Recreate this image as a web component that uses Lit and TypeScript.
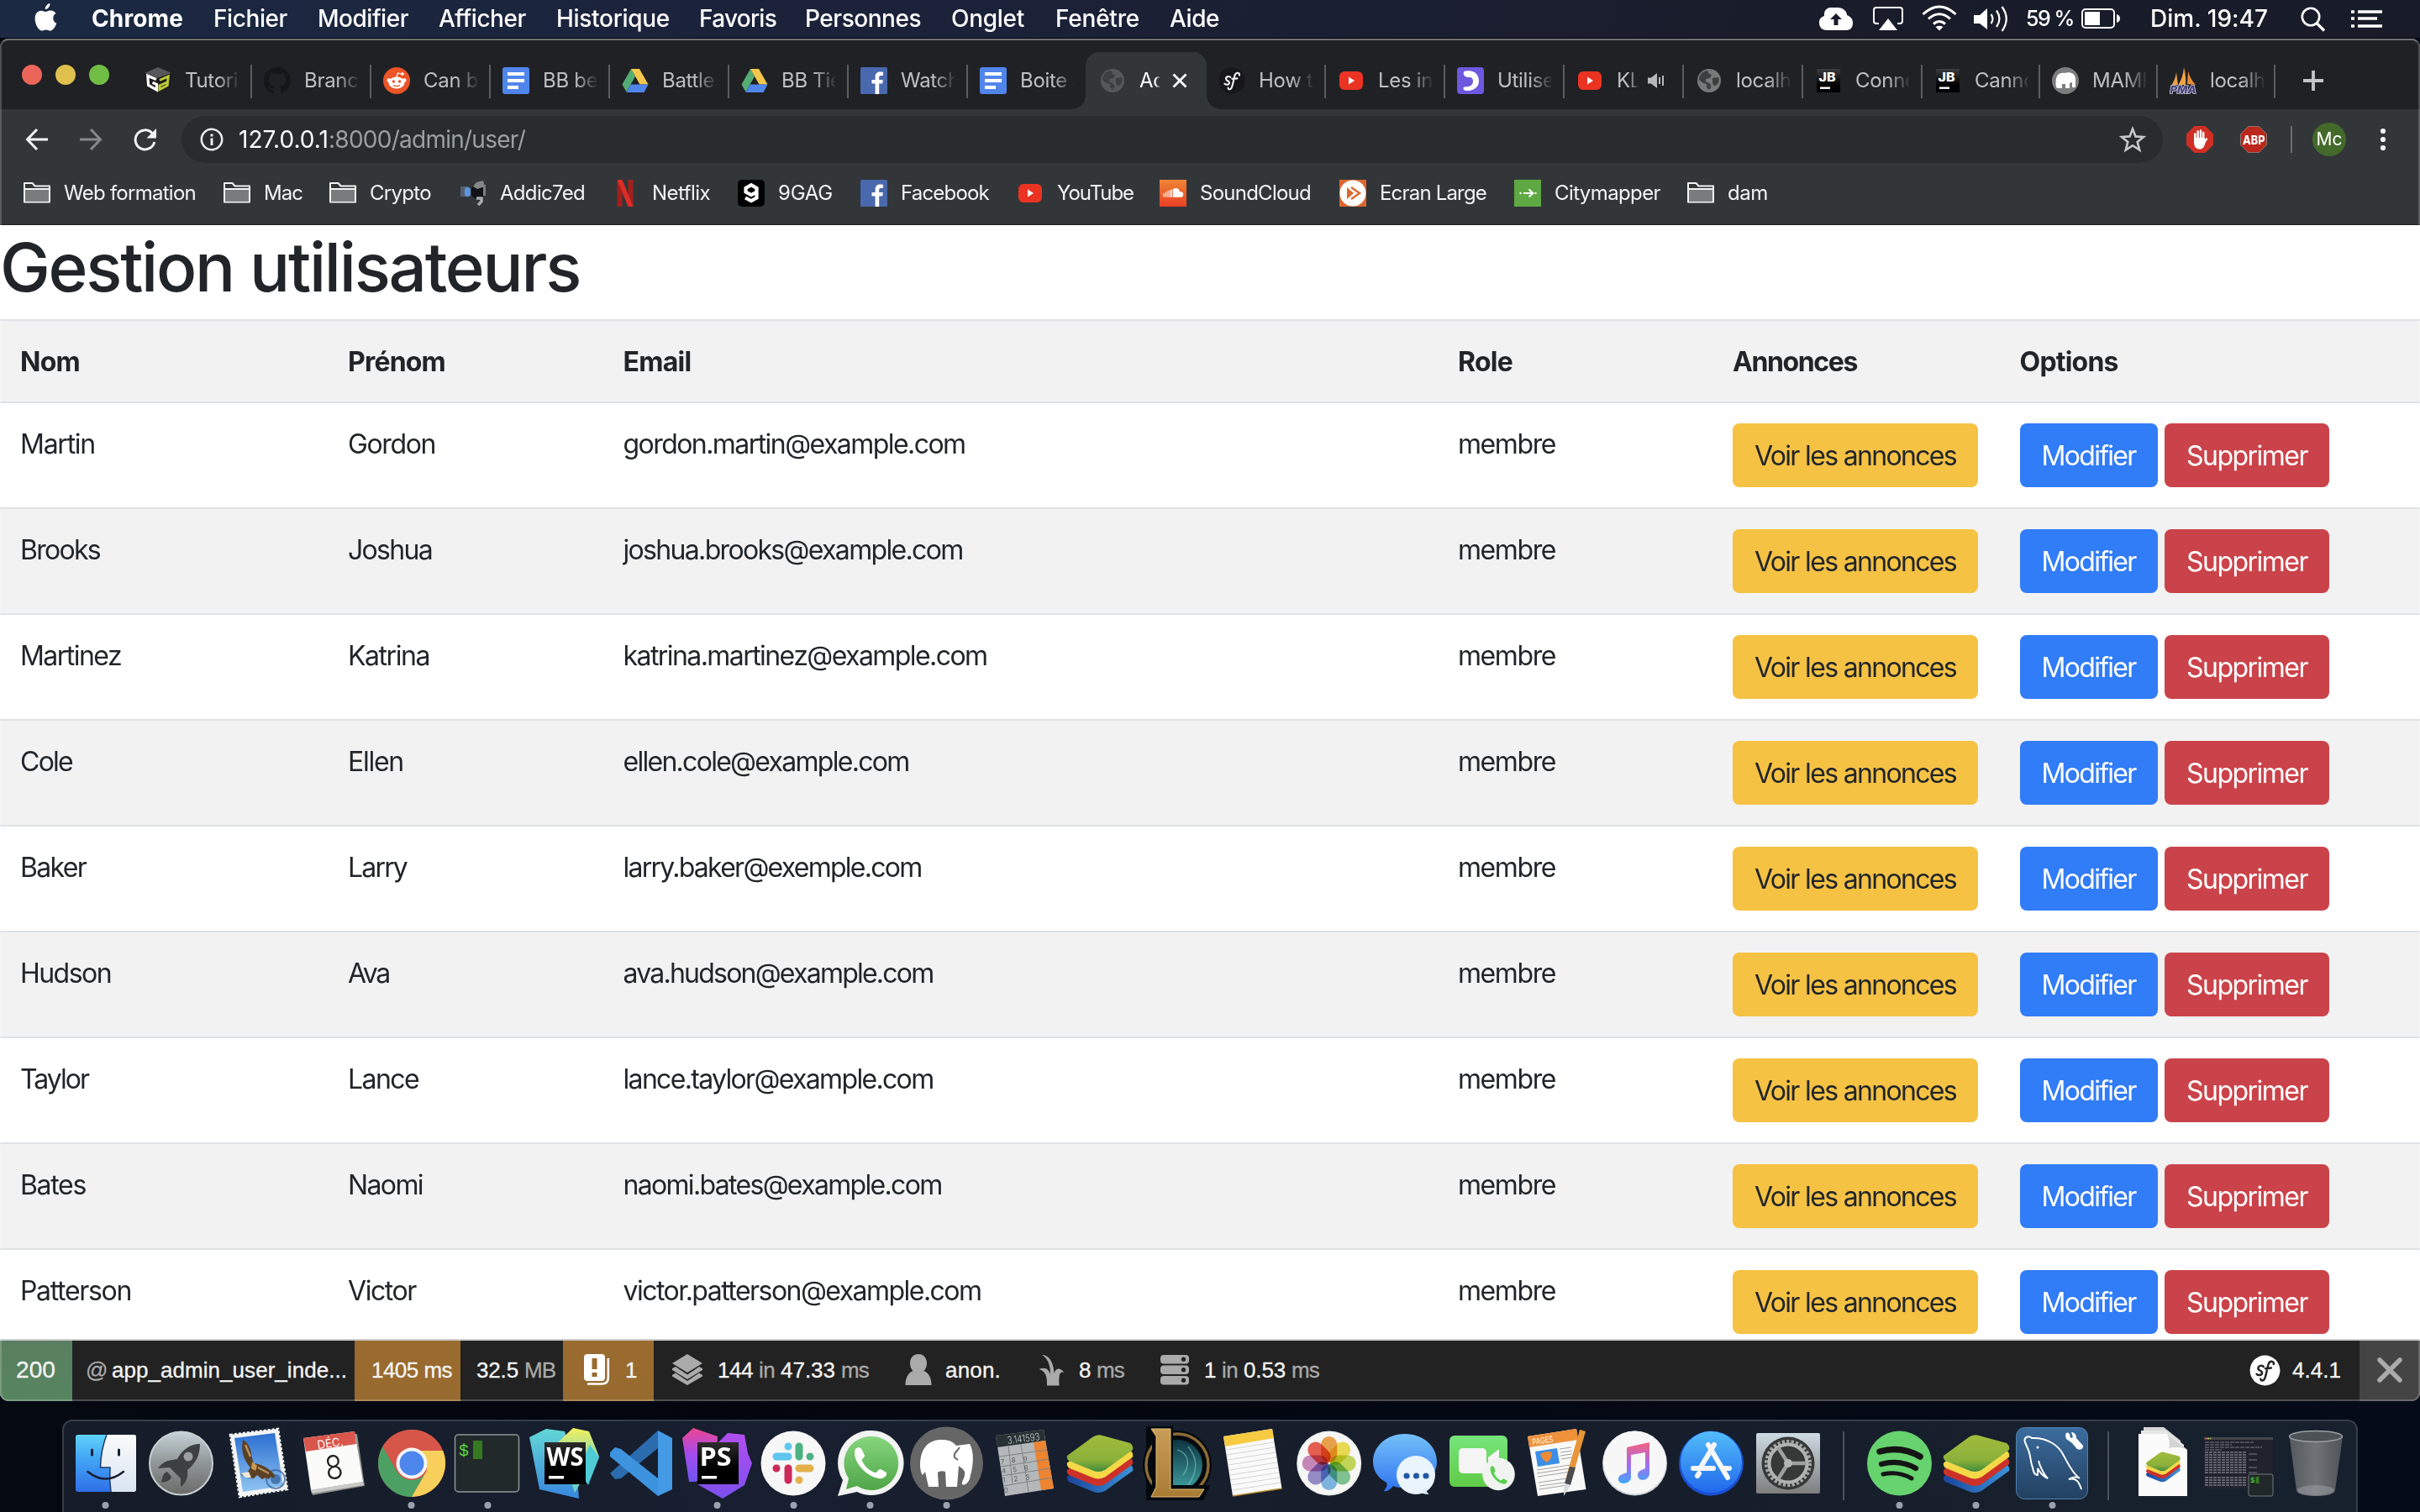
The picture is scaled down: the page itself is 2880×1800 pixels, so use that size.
import { LitElement, html, svg, css, nothing, TemplateResult } from "lit";
import { customElement, property } from "lit/decorators.js";

/* ---------- text run tracked to a given advance width ---------- */
@customElement("fit-text")
export class FitText extends LitElement {
  @property() text = "";
  @property({ type: Number }) w = 0;
  static styles = css`
    :host { display: inline-block; white-space: pre; flex: none; }
    .run { display: inline-block; }
  `;
  render() {
    return html`<span class="run">${this.text}</span>`;
  }
  updated() {
    const run = this.renderRoot.querySelector(".run") as HTMLElement;
    run.style.letterSpacing = "0px";
    const natural = run.getBoundingClientRect().width;
    if (this.w && natural) run.style.letterSpacing = `${(this.w - natural) / this.text.length}px`;
  }
}
const fit = (text: string, w: number, cls = "") => html`<fit-text class=${cls} .text=${text} .w=${w}></fit-text>`;

/* ---------- small icons (32 x 32) ---------- */
const ico = (body: unknown, w = 32, h = 32, vb = "0 0 32 32") =>
  html`<svg class="ico" width=${w} height=${h} viewBox=${vb}>${body}</svg>`;

const globe = (c: string, bg: string) => svg`<circle cx="16" cy="16" r="14" fill=${c}/>
  <path d="M14 4 C7 5 4 10 4 15 L9 19 L13 20 L13 24 L16 27 C19 24 19 21 16 19 L12 17 L12 14 L17 13 L19 9 L16 8 Z" fill=${bg}/>
  <path d="M20 13 L27 12 C29 17 26 22 22 22 L20 19 Z" fill=${bg}/>`;
const sfMark = (bg: string, fg: string) => svg`<circle cx="16" cy="16" r="15.5" fill=${bg}/>
  <path d="M14.5 12.2 C13.5 10.4 9.3 10.6 9 13.6 C8.8 16.6 13.4 15.8 13 18.6 C12.7 21.2 8.8 21.4 7.4 19.6" fill="none" stroke=${fg} stroke-width="2.1" stroke-linecap="round"/>
  <path d="M25 9.6 C25.4 6.6 21.4 5.4 19.8 9 C18.4 12.4 17.4 21 15.6 24.6 C14.4 27.2 11.4 26.8 11.6 24.6 M16.4 14 L22.4 13.4" fill="none" stroke=${fg} stroke-width="2.1" stroke-linecap="round"/>`;
const youtube = svg`<rect x="2" y="5" width="28" height="22" rx="6" fill="#eb3323"/><path d="M13 11.5 L20 16 L13 20.5 Z" fill="#fff"/>`;
const facebook = svg`<rect width="32" height="32" rx="1.5" fill="#4968ad"/><path d="M17.6 32 V19.5 H13.5 V15 H17.6 V11.5 C17.6 7.5 20 5.6 23.6 5.6 L27 5.8 V10 H24.6 C22.7 10 22.2 10.9 22.2 12.3 V15 H26.8 L26.2 19.5 H22.2 V32 Z" fill="#fff"/>`;
const docs = svg`<rect width="32" height="32" rx="3" fill="#5086ec"/><path d="M6 6 H26 V10 H6 Z M6 14 H26 V18 H6 Z M6 22 H19 V26 H6 Z" fill="#fff"/>`;
const drive = svg`<path d="M11 2 L0.5 20.5 L5.5 29.5 L16 11 Z" fill="#55ad76"/><path d="M11 2 H21 L31.5 20.5 H21.5 Z" fill="#f2c74c"/><path d="M10.7 20.5 H31.5 L26.5 30 H5.5 Z" fill="#4f86ec"/>`;
const reddit = svg`<circle cx="16" cy="16" r="16" fill="#eb5528"/><ellipse cx="16" cy="18.5" rx="9.5" ry="7" fill="#fff"/><circle cx="6.8" cy="15.5" r="2.3" fill="#fff"/><circle cx="25.2" cy="15.5" r="2.3" fill="#fff"/>
  <path d="M16 12 L17.5 7 L22 8" stroke="#fff" stroke-width="1.2" fill="none"/><circle cx="23" cy="8" r="1.8" fill="#fff"/><circle cx="12.4" cy="17" r="1.8" fill="#eb5528"/><circle cx="19.6" cy="17" r="1.8" fill="#eb5528"/><path d="M12 21.3 Q16 24.2 20 21.3" stroke="#eb5528" stroke-width="1.3" fill="none"/>`;
const github = svg`<path d="M16 0 A16 16 0 0 0 11 31.2 C12 31.4 12 30.7 12 30 V27 C7.600 28 6.600 25 6.600 25 C5 22.500 4 22.200 4 22.200 C6 21.500 7.500 24 7.500 24 C9 26 11 25.600 12.200 25 C12.400 24 12.700 23.300 13.200 22.800 C8 22 6 20 6 15 C6 13 6.600 11.800 7.700 10.700 C7.500 9 7.300 8 8 6.300 C10 6.300 11.500 7.800 12.300 8.300 A16 16 0 0 1 19.700 8.300 C20.500 7.800 22 6.300 24 6.300 C24.700 8 24.500 9 24.300 10.700 C25.400 11.800 26 13 26 15 C26 20 24 22 18.800 22.800 C19.700 23.600 20 24.700 20 26 V30 C20 30.700 20 31.400 21 31.200 A16 16 0 0 0 16 0 Z" fill="#171616"/>`;
const gamedev = svg`<path d="M16 0 L32 7 L16 13 L0 7 Z" fill="#58585a"/><path d="M0 7 L16 13 V30 L2 23 Z" fill="#1b1b1b"/><path d="M32 7 L16 13 V30 L30 23 Z" fill="#1b1b1b"/>
  <path d="M14 14.500 L3.800 10.300 L4.600 21.500 L14.500 27 V20.500 L9.500 18.200" fill="none" stroke="#fff" stroke-width="3.200"/><path d="M18 15.500 L28.200 11 L27.200 21.500 L18 26.500 V22 L28 17.500" fill="none" stroke="#bccb3a" stroke-width="3"/>`;
const utilise = svg`<rect width="32" height="32" rx="4" fill="#6e58e0"/><path d="M10 4.500 C21 3 26 9 26 16.500 C26 23 20.500 28.500 11.500 28 C8 27.800 6.500 25.500 8 24 C9.500 22.500 11 23.500 13.500 23 C17 22.300 19 20 19 16.500 C19 13 17 11.500 14 12 C8.500 13 5 5.500 10 4.500 Z" fill="#fff"/>`;
const jb = svg`<defs><linearGradient id="jbg" x1="0" y1="0" x2="0" y2="1"><stop offset="0" stop-color="#3c3c3c"/><stop offset=".7" stop-color="#000"/></linearGradient></defs><rect x="2" y="2" width="28" height="28" fill="url(#jbg)"/><text x="4.500" y="17" font-family="Inter" font-weight="800" font-size="14" textLength="20" lengthAdjust="spacingAndGlyphs" fill="#fff">JB</text><rect x="6" y="23.500" width="12" height="2.400" fill="#fff"/>`;
const elephantSmall = svg`<circle cx="16" cy="16" r="16" fill="#7d7d7d"/><path d="M5 24 C3 10 8 6 15 7 C21 5 28 7 28 14 V24 H24 V18 L21 19 V25 H16 V20 H12 V25 H7 Z" fill="#fff"/>`;
const pma = svg`<path d="M8 6 L10 21 L2 22 Q7 14 8 6 Z" fill="#e9a04e"/><path d="M17 0 Q20 12 19 21 L10.500 21 Q16 12 17 0 Z" fill="#f0a347"/><path d="M22 5 Q25 15 31 21 L21 20 Z" fill="#e88d38"/><text x="0.500" y="31" font-family="Inter" font-weight="800" font-style="italic" font-size="12" textLength="31" lengthAdjust="spacingAndGlyphs" fill="#43437c" stroke="#c9c9d8" stroke-width="1.600" paint-order="stroke">PMA</text>`;
const folder = svg`<path d="M1 26.500 V4 H10.500 L13.500 7.500 H31 V26.500 Z" fill="#313538" stroke="#f4f4f4" stroke-width="2" stroke-linejoin="round"/><rect x="2" y="12" width="28" height="13.500" fill="#7a7b7c"/><path d="M1 11 H31" stroke="#f4f4f4" stroke-width="2"/>`;
const addicted = svg`<rect x="1" y="8" width="9" height="12" fill="#55606e"/><rect x="14" y="6" width="16" height="16" rx="6" fill="#121315"/><rect x="6" y="9" width="7" height="11" rx="3" fill="#5e93dd"/><path d="M16 8 L20 3 L28 1 L30 8 L21 11 Z" fill="#84878a"/><rect x="28" y="6" width="3" height="13" fill="#7b7f83"/><path d="M20 22 H26 V26 L22 30" stroke="#a8abad" stroke-width="3.500" fill="none"/>`;
const netflix = svg`<path d="M6.500 0 H12.500 V32 H6.500 Z M19.500 0 H25.500 V32 H19.500 Z" fill="#a2201b"/><path d="M6.500 0 H12.500 L25.500 32 H19.500 Z" fill="#dc2d27"/>`;
const ninegag = svg`<rect width="32" height="32" rx="5" fill="#000"/><path d="M22.500 14.500 L16 18 L9.500 14.500 V10 L16 6.200 L22.500 10 V21.500 L16 25.200 L9 21.500" fill="none" stroke="#fff" stroke-width="4.200"/>`;
const soundcloud = svg`<defs><linearGradient id="scg" x1="0" y1="0" x2="0" y2="1"><stop offset="0" stop-color="#ee8534"/><stop offset="1" stop-color="#ea3f24"/></linearGradient></defs><rect width="32" height="32" fill="url(#scg)"/><path d="M16 20.800 V11 C21 8 24 12 24 14.500 C27 13.500 28.500 16 28.300 18 C28 20 26.500 20.800 25 20.800 Z" fill="#fff"/><path d="M5 20.500 V16 M7.500 20.800 V14.500 M10 20.800 V13 M12.500 20.800 V12 M14.500 20.800 V11.500" stroke="#fff" stroke-width="1.300"/>`;
const ecran = svg`<rect width="32" height="32" fill="#dd682f"/><circle cx="16" cy="16" r="15.500" fill="#fff"/><path d="M9 9 L17 16 L9 23 Z" fill="#dd682f"/><path d="M14 9 L24 16 L14 23" fill="none" stroke="#dd682f" stroke-width="2.500"/>`;
const citymapper = svg`<rect width="32" height="32" fill="#5fa843"/><path d="M11 16 H22 M17.500 11.500 L22.500 16 L17.500 20.500" stroke="#fff" stroke-width="2" fill="none"/><circle cx="7.500" cy="16" r="1.200" fill="#fff"/><circle cx="25.500" cy="16" r="1.200" fill="#fff"/>`;

interface Tab { t: string; i: unknown; w?: number; last?: boolean; kind?: "active" | "audio"; }
const TABS: Tab[] = [
  { t: "Tutoriel", i: gamedev }, { t: "Branch", i: github }, { t: "Can br", i: reddit }, { t: "BB bet", i: docs },
  { t: "Battle", i: drive }, { t: "BB Tier", i: drive }, { t: "Watch", i: facebook }, { t: "Boite à", i: docs, last: true },
  { t: "Ad", i: globe("#54585b", "#3b3f42"), kind: "active" },
  { t: "How to", i: sfMark("#17161a", "#f2f2f2") }, { t: "Les in", i: youtube }, { t: "Utiliser", i: utilise },
  { t: "KL", i: youtube, kind: "audio" }, { t: "localhost", i: globe("#787878", "#3d3e40") },
  { t: "Conne", i: jb }, { t: "Canno", i: jb, w: 140 }, { t: "MAMP", i: elephantSmall, w: 140 }, { t: "localhost", i: pma, w: 140 },
];

/* label, width of label, icon */
const MARKS: [string, number, unknown][] = [
  ["Web formation", 157, folder], ["Mac", 46, folder], ["Crypto", 73, folder], ["Addic7ed", 101, addicted], ["Netflix", 69, netflix],
  ["9GAG", 65, ninegag], ["Facebook", 105, facebook], ["YouTube", 91, youtube], ["SoundCloud", 132, soundcloud],
  ["Ecran Large", 127, ecran], ["Citymapper", 126, citymapper], ["dam", 48, folder],
];
const MARK_X = [28, 266, 392, 547, 728, 878, 1024, 1210, 1380, 1594, 1802, 2008, 2140];

/* label, left edge, advance width */
const MENU: [string, number, number][] = [
  ["Fichier", 254, 88], ["Modifier", 378, 108], ["Afficher", 522, 104], ["Historique", 662, 135], ["Favoris", 832, 92],
  ["Personnes", 958, 138], ["Onglet", 1132, 87], ["Fenêtre", 1256, 100], ["Aide", 1392, 59],
];

/* text, advance width */
type Cell = [string, number];
const USERS: [Cell, Cell, Cell][] = [
  [["Martin", 89], ["Gordon", 104], ["gordon.martin@example.com", 407]],
  [["Brooks", 95], ["Joshua", 100], ["joshua.brooks@example.com", 404]],
  [["Martinez", 120], ["Katrina", 97], ["katrina.martinez@example.com", 433]],
  [["Cole", 62], ["Ellen", 66], ["ellen.cole@example.com", 340]],
  [["Baker", 78], ["Larry", 70], ["larry.baker@exemple.com", 355]],
  [["Hudson", 108], ["Ava", 49], ["ava.hudson@example.com", 369]],
  [["Taylor", 81], ["Lance", 84], ["lance.taylor@example.com", 369]],
  [["Bates", 78], ["Naomi", 89], ["naomi.bates@example.com", 379]],
  [["Patterson", 132], ["Victor", 81], ["victor.patterson@example.com", 426]],
];

/* ---------- dock artwork, one 91 x 110 slot each ---------- */
const lin = (id: string, stops: [number, string][], x2 = 0, y2 = 1) =>
  svg`<linearGradient id=${id} x1="0" y1="0" x2=${x2} y2=${y2}>${stops.map(([o, c]) => svg`<stop offset=${o} stop-color=${c}/>`)}</linearGradient>`;

const finder = svg`<defs>${lin("fi1", [[0, "#5fd3fb"], [.4, "#43a7f5"], [1, "#2f6fe8"]])}${lin("fi2", [[0, "#fafafa"], [1, "#d9e5f2"]])}</defs>
  <rect x="10" y="18" width="72" height="68" rx="3" fill="url(#fi1)"/>
  <path d="M47 18 H79 Q82 18 82 21 V83 Q82 86 79 86 H52 Q50 72 51 57 H39.500 Q40 36 47 18 Z" fill="url(#fi2)"/>
  <path d="M47 18 Q40 36 39.500 57 H51 Q50 72 52 86" fill="none" stroke="#1d3c66" stroke-width="1.500"/>
  <path d="M29.500 36 V42 M61.500 36 V42" stroke="#16202e" stroke-width="3" stroke-linecap="round"/>
  <path d="M24.500 62 Q45.500 79 67 62" fill="none" stroke="#16202e" stroke-width="2.500" stroke-linecap="round"/>`;
const launchpad = svg`<defs>${lin("lp", [[0, "#c5d3d7"], [.5, "#8f9596"], [1, "#6b6a69"]])}</defs><circle cx="44.500" cy="52" r="37.500" fill="url(#lp)" stroke="#c9d0d2" stroke-width="2"/>
  <path d="M67 29 C55 29 46 36 40 47 L29 49 C22 51 19 56 17 58 L31 57 L44 70 L44 80 C51 75 53 68 52 60 C62 52 67 42 67 29 Z" fill="#3e4042"/>
  <circle cx="53" cy="44" r="5.500" fill="#9a9fa0"/><path d="M28 62 C22 64 22 71 21 75 C26 74 32 73 33 68 Z" fill="#3e4042"/>`;
const mail = svg`<defs>${lin("ml", [[0, "#2b6fd1"], [1, "#8fc4f2"]])}</defs>
  <path d="M12 18 L69 11 L80 83 L23 92 Z" fill="#f3f4f4" stroke="#f3f4f4" stroke-width="2.500" stroke-dasharray="3 2"/>
  <path d="M17 22 L65 16 L75 79 L27 86 Z" fill="url(#ml)"/>
  <circle cx="66" cy="71" r="11" fill="none" stroke="#315e95" stroke-width="2" opacity=".7"/><circle cx="66" cy="71" r="6" fill="#315e95" opacity=".7"/>
  <path d="M27 24 C34 27 37 36 38 46 L40 52 C48 53 58 57 65 66 L64 70 L60 68 L58 71 L54 69 L50 71 L44 66 L40 70 L32 69 L28 67 L24 65 L32 63 L36 57 C30 50 24 40 27 24 Z" fill="#5b4024"/>
  <path d="M30 30 L36 44 M45 57 L58 64" stroke="#b8925f" stroke-width="2.500"/><path d="M38 50 L44 55 L42 61 L37 58 Z" fill="#c99a52"/><path d="M25 64 L34 62 L37 69 L30 69 Z" fill="#efe7da"/>`;
const calendar = svg`<path d="M9 26 L72 17 L81 79 L19 90 Z" fill="#8d8d8b"/><path d="M8 22 L69 14 L79 74 L17 84 Z" fill="#fbfbfa"/><path d="M8 22 L69 14 L71 29 L11 38 Z" fill="#d9564c"/>
  <path d="M17 84 L79 74 L80 78 L18 88 Z" fill="#c9c9c7"/>
  <g transform="rotate(-8 42 50)" text-anchor="middle" font-family="Inter"><text x="43" y="33" font-size="14" textLength="31" lengthAdjust="spacingAndGlyphs" fill="#fff">DÉC.</text><text x="43.500" y="71" font-size="39" font-weight="300" textLength="21" lengthAdjust="spacingAndGlyphs" fill="#222">8</text></g>`;
const chrome = svg`<circle cx="46" cy="52" r="40" fill="#d6564a"/>
  <path d="M11.400 32 A40 40 0 0 0 46 92 L63.300 62 A20 20 0 0 1 28.700 62 Z" fill="#4ba163"/>
  <path d="M46 92 A40 40 0 0 0 83.200 37 H46 A20 20 0 0 1 63.300 62 Z" fill="#f8cf5a"/>
  <path d="M83.200 37 A40 40 0 0 0 11.400 32 L28.700 62 A20 20 0 0 1 46 34 H82 Z" fill="#d6564a"/>
  <circle cx="46" cy="52" r="18.500" fill="#f4f5f6"/><circle cx="46" cy="52" r="14.500" fill="#4d87ee"/>`;
const terminal = svg`<rect x="6.500" y="18" width="76" height="68" rx="4" fill="#21292b" stroke="#8e9698" stroke-width="1.500"/><text x="11" y="43" font-family="Liberation Mono" font-size="20" fill="#5be03c">$</text><rect x="28" y="25" width="11" height="22" fill="#357a20"/>`;
const ide = (id: string, label: string, tw: string, shapes: unknown) => svg`<defs>${lin(id, [[0, "#2c2c2c"], [.6, "#000"]])}</defs>${shapes}
  <rect x="22" y="27" width="49" height="50" fill=${`url(#${id})`}/><text x="24.500" y="54.500" font-family="Open Sans" font-weight="700" font-size="30" textLength=${tw} lengthAdjust="spacingAndGlyphs" fill="#fff">${label}</text><rect x="27" y="67" width="18" height="3.500" fill="#fff"/>`;
const webstorm = ide("ws", "WS", "44", svg`<defs>${lin("wsa", [[0, "#62d7d6"], [1, "#3986dd"]])}${lin("wsb", [[0, "#f6f05b"], [.6, "#68d5c9"]])}</defs><path d="M4 21 L24 11 L46 14 L60 60 L63 94 L16 83 Z" fill="url(#wsa)"/><path d="M38 27 L56 10 L75 14 L87 44 L74 60 L58 87 Z" fill="url(#wsb)"/><path d="M76 30 L87 45 L74 78 L62 60 Z" fill="#4ecbd4"/>`);
const phpstorm = ide("ps", "PS", "38", svg`<defs>${lin("psa", [[0, "#ee4590"], [.5, "#a24cf0"], [1, "#7054f1"]])}${lin("psb", [[0, "#b24df0"], [1, "#7c50ee"]])}</defs><path d="M4 22 L17 10 L46 20 L44 60 L20 74 L12 74 Z" fill="url(#psa)"/><path d="M44 30 L58 16 L78 18 L82 40 L87 52 L78 78 L52 94 L22 77 Z" fill="url(#psb)"/>`);
const vscode = svg`<path d="M66 13 L9 64 L15 71 L22 70 L66 34 Z" fill="#2a6cae"/><path d="M9 39 L15 33 L22 35 L66 70 V91 L9 44 Z" fill="#3d93dd"/><path d="M66 13 L83 22 V83 L66 91 Z" fill="#459ae6"/>`;
const slack = svg`<circle cx="45" cy="52" r="38.500" fill="#f7f7f7"/><g stroke-width="9" stroke-linecap="round"><path d="M39 32 V32.100 M25 44 H39" stroke="#5fc6ef"/><path d="M52 32 V44 M65 44 V44.100" stroke="#4db283"/><path d="M52 72 V72.100 M52 58 H65" stroke="#e3b04a"/><path d="M39 58 V72 M25 58 V58.100" stroke="#cc2a59"/></g>`;
const whatsapp = svg`<defs>${lin("wa", [[0, "#86d57e"], [1, "#4fa647"]])}</defs><path d="M46 13 A38.500 38.500 0 1 1 30 86 L7 91 L13 72 A38.500 38.500 0 0 1 46 13 Z" fill="#f2f3f2"/><path d="M46 20 A32 32 0 1 1 30 79 L17 83 L20 70 A32 32 0 0 1 46 20 Z" fill="url(#wa)"/>
  <path d="M28 35 C31 32 35 33 36 36 L39 43 C39 46 35 46 36 49 C39 56 45 61 51 63 C54 64 55 58 58 59 L65 63 C66 68 60 71 56 70 C42 68 26 52 27 38 Z" fill="#fff"/>`;
const mamp = svg`<circle cx="45.500" cy="52" r="43.500" fill="#666"/><path d="M14 55 C14 34 24 24 39 24 C47 24 52 25 57 31 L73 29 C79 39 77 56 74 66 C73 76 66 79 64 77 C63 73 68 70 67 62 C65 58 62 57 60 55 L58 80 H45 L44 62 C39 60 36 62 35 63 L36 80 H24 L20 62 L17 66 C15 64 14 58 14 55 Z" fill="#fff"/><path d="M61 33 C56 40 54 40 55 45 L59 48" fill="none" stroke="#666" stroke-width="2"/>`;
const calculator = svg`<path d="M13 19 L70 12 L82 82 L24 91 Z" fill="#b4b8bb"/><path d="M13 19 L70 12 L72 25 L15 33 Z" fill="#283134"/><path d="M58 27 L72 25 L82 82 L67 84 Z" fill="#ec8432"/>
  <path d="M17 44 L74 36 M19 56 L76 47 M20 67 L78 58 M22 79 L80 69 M28 31 L33 76 M43 29 L52 86" stroke="#7f8387" stroke-width="1"/>
  <g transform="rotate(-7 45 50)" font-family="Inter" font-weight="300" fill="#3c4043"><text x="30" y="27" font-size="12" textLength="39" lengthAdjust="spacingAndGlyphs" fill="#c9d0d0">3.141593</text><text font-size="8"><tspan x="19" y="50">7</tspan><tspan x="32" y="50">8</tspan><tspan x="46" y="50">9</tspan><tspan x="19" y="61">4</tspan><tspan x="32" y="61">5</tspan><tspan x="46" y="61">6</tspan><tspan x="19" y="72">1</tspan><tspan x="32" y="72">2</tspan><tspan x="46" y="72">3</tspan><tspan x="19" y="84">0</tspan></text></g>`;
const stackLayer = (dy: number, fill: string) => svg`<path transform=${`translate(0 ${dy})`} d="M7 43 L37 21 Q43 17 49 19 L82 28 Q86 31 85 36 L52 60 Q44 64 36 60 L9 49 Q6 46 7 43 Z" fill=${fill}/>`;
const bluestacks = (p: string) => svg`<defs>${lin(p, [[0, "#a0bd3d"], [.7, "#8bb03a"], [1, "#3c8b3b"]])}${lin(p + "b", [[0, "#1b459d"], [1, "#3a93d8"]], 1, 0)}</defs>
  ${stackLayer(25, `url(#${p}b)`)}${stackLayer(17, "#cc3129")}${stackLayer(8.500, "#f5d848")}${stackLayer(0, `url(#${p})`)}`;
const lol = svg`<defs>${lin("lo", [[0, "#0d3540"], [1, "#3f9e9f"]])}${lin("lg", [[0, "#c79d58"], [1, "#a97b35"]])}</defs><circle cx="47" cy="54" r="41" fill="#04090f"/><path d="M10 8 H42 V78 H86 L78 96 H10 Z" fill="#04090f"/>
  <circle cx="47" cy="54" r="37" fill="none" stroke="#8c6b35" stroke-width="3.500"/><circle cx="47" cy="54" r="30" fill="url(#lo)"/>
  <path d="M47 36 C62 40 62 56 54 66 M60 32 C73 48 70 64 60 78" fill="none" stroke="#8bd6d0" stroke-width="1.500" opacity=".5"/><path d="M10 8 H42 V78 H86 L78 96 H10 L17 82 V22 Z" fill="#04090f"/>
  <path d="M16 11 H39 V83 H79 L73 92 H16 L22 80 V20 Z" fill="url(#lg)" stroke="#e3c078" stroke-width="1"/>`;
const notes = svg`<path d="M11 20 L69 11 L80.500 82 L22 91 Z" fill="#fafafa"/><path d="M11 20 L69 11 L71 22 L13 32 Z" fill="#f6cb42"/><path d="M22 91 L80.500 82" stroke="#b58a2a" stroke-width="1.500"/>
  <path d="M14 36 L71 27 M15 42 L72 33 M16 48 L73 39 M17 54 L74 45 M18 60 L75 51 M19 66 L76 57 M19 72 L77 63 M20 78 L78 69 M21 84 L79 75" stroke="#d4d4d6" stroke-width="1"/>`;
const petals = ["#f09a38", "#eedd3c", "#bfd745", "#72c088", "#6fb2e4", "#8a7fc8", "#c77ab6", "#ea4c3c"];
const photos = svg`<circle cx="45.700" cy="52" r="38.500" fill="#ececec"/><circle cx="45.700" cy="52" r="37" fill="#f6f6f5"/>${petals.map((c, i) => svg`<rect x="36.200" y="20" width="19" height="31" rx="9.500" fill=${c} opacity=".88" style="mix-blend-mode:multiply" transform=${`rotate(${i * 45} 45.700 52)`}/>`)}`;
const messages = svg`<defs>${lin("ms", [[0, "#74c0f8"], [1, "#2f74f2"]])}</defs><path d="M45 17 C67 17 83 32 83 50 C83 68 67 81 45 81 C40 81 35 81 31 79 C28 83 23 86 20 85 C22 82 25 79 23 75 C12 69 7 60 7 50 C7 32 23 17 45 17 Z" fill="url(#ms)"/><circle cx="58" cy="66" r="23" fill="#eaf4fc"/><path d="M62 87 Q69 89 74 89 Q70 86 70 81 Z" fill="#dceefb"/>
  <circle cx="47" cy="67" r="3.600" fill="#2457a5"/><circle cx="58.500" cy="67" r="3.600" fill="#2457a5"/><circle cx="70" cy="67" r="3.600" fill="#2457a5"/>`;
const phone = (x: number, y: number, s: number, c: string) => svg`<path transform=${`translate(${x} ${y}) scale(${s})`} d="M2 2 C5 -1 8 1 9 4 L11 10 C11 13 8 13 9 16 C12 22 16 27 22 29 C24 29 25 25 28 26 L34 29 C36 33 31 37 27 36 C14 34 0 18 1 5 Z" fill=${c}/>`;
const facetime = svg`<defs>${lin("ft", [[0, "#76e57c"], [1, "#5fcb46"]])}</defs><rect x="7" y="19" width="69" height="61" rx="6" fill="url(#ft)"/><rect x="18" y="34" width="33" height="30" rx="5" fill="#f4f5f4"/><path d="M53 45 L66 35 V62 L53 53 Z" fill="#f4f5f4"/><circle cx="65.500" cy="65" r="19.300" fill="#f1f3f0"/>${phone(55, 55, .6, "#5bcf50")}`;
const pages = svg`<path d="M9 20 L67 11 L78.500 83 L21 91 Z" fill="#f8f8f7"/><path d="M9 20 L67 11 L69 24 L11 33 Z" fill="#ee9139"/><text x="15" y="30" transform="rotate(-8 15 30)" font-family="Inter" font-size="10" textLength="25" lengthAdjust="spacingAndGlyphs" fill="#fff">PAGES</text>
  <path d="M18 38 L44 34 L47 52 L21 56 Z" fill="#3b8fe6"/><path d="M24 41 Q31 36 38 39 Q38 47 32 51 Q26 48 24 41 Z" fill="#ef8a35"/>
  <path d="M47 35 L61 33 M48 39 L62 37 M48 43 L62 41 M49 47 L62 45 M20 60 L66 53 M20 64 L66 57 M21 68 L60 62 M22 75 L62 69 M23 79 L60 74 M23 83 L56 78" stroke="#a5a5a5" stroke-width="1.200"/>
  <path d="M71 12 L78 14 L62 70 L55 68 Z" fill="#e8963a"/><path d="M59 56 L66 57 L60 78 L53 76 Z" fill="#4a4c4f"/><path d="M53 76 L60 78 L52 91 Z" fill="#d5dbe0"/>`;
const music = svg`<defs>${lin("mu", [[0, "#f6617c"], [.55, "#a56bf0"], [1, "#3fa9f5"]])}</defs><circle cx="45.500" cy="52" r="38.500" fill="#cfd3d8"/><circle cx="45.500" cy="51" r="37.500" fill="#f7f7f8"/><path d="M36 33 L63 27 V64 C63 73 49 75 49 66 C49 61 54 60 58 58 V39 L41 42 V69 C41 77 25 79 26 70 C27 65 32 65 36 63 Z" fill="url(#mu)"/>`;
const appstore = svg`<defs>${lin("as", [[0, "#53bdfa"], [1, "#2168ec"]])}</defs><circle cx="45.500" cy="52" r="38.500" fill="#1a4fd6"/><circle cx="45.500" cy="50.500" r="36.500" fill="url(#as)"/><g stroke="#f4f6f8" stroke-width="6" stroke-linecap="round" fill="none"><path d="M42 30 L65 69 M49 30 L34 55"/><path d="M24 58 H48 M61 58 H67 M29 67 L31 64"/></g>`;
const settings = svg`<defs>${lin("se", [[0, "#cddae2"], [1, "#7e7e7e"]])}</defs><rect x="8" y="16" width="76" height="72" rx="2" fill="url(#se)"/><circle cx="46" cy="52" r="31.500" fill="#373838"/><circle cx="46" cy="52" r="26" fill="none" stroke="#a5a6a6" stroke-width="4" stroke-dasharray="3.200 2.250"/><circle cx="46" cy="52" r="22.500" fill="none" stroke="#b2b3b3" stroke-width="4"/><path d="M46 52 L34 33 M46 52 H68 M46 52 L34 71" stroke="#9ea0a0" stroke-width="4.500"/><circle cx="46" cy="52" r="5" fill="#b4b5b6"/>`;
const spotify = svg`<circle cx="45.500" cy="52" r="38.500" fill="#66d36e"/><g fill="none" stroke="#151515" stroke-linecap="round"><path d="M22 38 Q48 31 70 44" stroke-width="7.500"/><path d="M24 53 Q46 47 65 58" stroke-width="6.300"/><path d="M26 65 Q44 61 60 70" stroke-width="5"/></g>`;
const mysql = svg`<defs>${lin("my", [[0, "#3c6c9f"], [1, "#22405f"]])}</defs><rect x="2.500" y="9.500" width="85" height="85" rx="10" fill="url(#my)" stroke="#4f83b5"/>
  <path d="M80 83 C77 73 73 69 65 71 C73 66 78 70 78 70 C69 64 63 50 59 43 C53 30 38 21 21 22 C16 18 11 22 13 27 L16 34 C20 42 19 50 22 57 C23 64 26 66 28 66 L28 58 C31 64 36 68 40 70 C36 66 31 57 29 49" fill="none" stroke="#fff" stroke-width="2"/><circle cx="28" cy="33" r="1.500" fill="#fff"/>
  <path d="M66 17 C62 13 60 17 62 23 L69 28 L74 34 C76 37 83 36 82 31 L74 22 C74 18 72 15 68 15 L70 21 L67 22 Z" fill="#fff"/>`;
const docStack = svg`<path d="M22 9 H46 L66 25 V88 H22 Z" fill="#d7d7d7"/><path d="M19 13 H48 L70 30 V89 H19 Z" fill="#e6e6e6"/><path d="M16 17 H50 L74 36 V91 H16 Z" fill="#fbfbfb"/><path d="M50 17 C54 24 53 32 52 34 C60 32 68 33 74 36 Z" fill="#d4d4d4"/><g transform="translate(21.500 29) scale(.52)">${bluestacks("bd")}</g>`;
const termWin = svg`<rect x="3" y="21" width="82" height="61" fill="#22222f"/><rect x="3" y="21" width="82" height="3" fill="#45464a"/><circle cx="5.500" cy="22.500" r="1" fill="#e6655c"/><circle cx="8" cy="22.500" r="1" fill="#e0b53d"/><circle cx="10.500" cy="22.500" r="1" fill="#65c24a"/>
  <path d="M4 27 H62 M4 30 H36 M4 33 H72 M4 36 H24" stroke="#797984" stroke-width="1" stroke-dasharray="5 1"/><g stroke="#797984" stroke-width="1.300" stroke-dasharray="4 1">${[39, 42, 45, 48, 51, 54, 57, 60, 63, 69, 72, 75, 78].map((y) => svg`<path d=${`M4 ${y} H54`}/>`)}</g><path d="M56 41 H66 M56 48 H66 M56 57 H66 M56 63 H66" stroke="#797984"/>
  <rect x="56" y="65" width="29" height="26" rx="2" fill="#20282a" stroke="#73797b"/><text x="58" y="75" font-family="Liberation Mono" font-size="9" fill="#5be03c">$</text><rect x="64.500" y="68" width="4" height="8" fill="#357a20"/>`;
const trash = svg`<defs>${lin("tr", [[0, "#5c6064"], [.5, "#7a7d80"], [1, "#55595e"]], 1, 0)}</defs><path d="M13.500 20 L22 84 Q23 91 45 91 Q67 91 68 84 L77 20 Z" fill="url(#tr)" opacity=".9"/><ellipse cx="45" cy="20" rx="31.500" ry="6.500" fill="#4d5257" stroke="#999ea2" stroke-width="1.500"/><ellipse cx="45" cy="84" rx="22" ry="6" fill="#a7aaad" opacity=".45"/>`;

const DOCK: (([unknown, boolean?]) | number)[] = [
  [finder, true], [launchpad], [mail], [calendar], [chrome, true], [terminal, true], [webstorm], [vscode], [phpstorm, true], [slack, true],
  [whatsapp, true], [mamp, true], [calculator], [bluestacks("b1")], [lol], [notes], [photos], [messages], [facetime], [pages], [music], [appstore], [settings],
  42, [spotify, true], [bluestacks("b2"), true], [mysql, true], 41, [docStack], [termWin], [trash],
];

@customElement("app-root")
export class AppRoot extends LitElement {
  static styles = css`
    :host { display: block; width: 2880px; height: 1800px; overflow: hidden; font-family: Inter, "Liberation Sans", sans-serif; }
    * { box-sizing: border-box; }
    svg { display: block; flex: none; }
    .desktop { width: 2880px; height: 1800px; display: flex; flex-direction: column; background: linear-gradient(90deg, #050912, #03060e 30%, #050b18 100%); overflow: hidden; }
    .menubar { height: 46px; flex: none; display: flex; align-items: center; padding: 0 0 2px 0; color: #fff; font-size: 28px; line-height: 44px; font-weight: 450; background: linear-gradient(90deg, #1b2943, #1b2138 40%, #191c2a 75%, #181b28); border-bottom: 1px solid #04060b; }
    .apple { margin-left: 41px; margin-top: -3px; }
    .app { margin-left: 41px; font-weight: 700; width: 145px; }
    .status { margin-left: auto; display: flex; align-items: center; margin-right: 44px; }
    .pct { font-size: 25px; margin-left: 20px; }
    .clock { margin-left: 35px; }

    .window { flex: none; height: 1622px; display: flex; flex-direction: column; position: relative; border-radius: 10px; overflow: hidden; background: #fff; }
    .window::after { content: ""; position: absolute; inset: 0; border: 2px solid rgba(255, 255, 255, .2); border-top-color: rgba(255, 255, 255, .36); border-radius: 10px; pointer-events: none; }
    .strip { height: 84px; flex: none; background: #202124; display: flex; align-items: flex-end; padding-left: 26px; }
    .lights { display: flex; gap: 16px; width: 132px; padding-bottom: 29px; }
    .light { width: 24px; height: 24px; border-radius: 50%; }
    .red { background: #ec6559; } .yellow { background: #e0c04c; } .green { background: #71be47; }
    .tab { height: 68px; flex: none; width: 142px; display: flex; align-items: center; padding-left: 14px; position: relative; color: #bcc0c4; }
    .tab .label { font-size: 24px; letter-spacing: -.3px; margin: -1px 0 0 16px; width: 64px; flex: none; overflow: hidden; white-space: nowrap; -webkit-mask-image: linear-gradient(90deg, #000 60%, transparent 104%); }
    .bar { width: 2px; height: 40px; margin-left: auto; background: #5a5c60; margin-top: 2px; flex: none; }
    .tab.active { background: #323639; width: 144px; margin-left: -2px; border-radius: 16px 16px 0 0; color: #fff; padding-left: 16px; }
    .tab.active .label { width: 25px; margin-left: 16px; -webkit-mask-image: linear-gradient(90deg, #000 75%, transparent 100%); }
    .tab.active::before, .tab.active::after { content: ""; position: absolute; bottom: 0; width: 16px; height: 16px; }
    .tab.active::before { left: -16px; background: radial-gradient(circle at 0 0, transparent 15.500px, #323639 16px); }
    .tab.active::after { right: -16px; background: radial-gradient(circle at 100% 0, transparent 15.500px, #323639 16px); }
    .tab.audio .label { width: 26px; -webkit-mask-image: linear-gradient(90deg, #000 55%, transparent 100%); }
    .close { margin-left: 14px; }
    .speaker { margin-left: 11px; }
    .plus { margin: 0 0 22px 33px; }

    .toolbar { height: 72px; flex: none; background: #323639; display: flex; align-items: center; padding-left: 30px; }
    .nav { display: flex; width: 186px; gap: 36px; flex: none; }
    .pill { width: 2358px; height: 56px; border-radius: 28px; background: #282c2f; display: flex; align-items: center; padding: 0 20px 0 22px; font-size: 28px; color: #9aa0a2; flex: none; }
    .host { color: #fff; margin-left: 18px; }
    .star { margin-left: auto; }
    .ext { display: flex; align-items: center; margin-left: 28px; }
    .abp { margin-left: 32px; }
    .vr { width: 2px; height: 32px; background: #6b6e71; margin: 0 24px 0 28px; }
    .avatar { width: 40px; height: 40px; border-radius: 50%; background: #436a2a; color: #fff; font-size: 21px; line-height: 40px; text-align: center; }
    .dots { margin-left: 40px; }
    .marks { height: 66px; flex: none; background: #323639; display: flex; align-items: center; padding: 0 0 10px 28px; color: #f1f3f4; font-size: 24px; border-bottom: 1px solid #1c1e20; }
    .mark { display: flex; align-items: center; gap: 16px; flex: none; }

    .page { height: 1326px; flex: none; overflow: hidden; color: #212529; }
    h1 { margin: 0; padding-top: 2px; font-size: 80px; line-height: 96px; font-weight: 500; height: 112px; }
    .row { display: grid; grid-template-columns: 390px 327.500px 993.500px 327px 341.600px 1fr; border-top: 2px solid #dee2e6; padding: 24px 0; height: 126px; font-size: 32px; line-height: 48px; align-items: start; }
    .row > * { margin-left: 24px; }
    .row > fit-text { margin-top: 1px; }
    .row.head { height: 98px; font-weight: 700; }
    .row.odd { background: #f2f2f2; }
    .btns { display: flex; gap: 8.400px; }
    .btn { height: 76px; padding: 1px 26px 0; line-height: 76px; border-radius: 8px; display: flex; width: max-content; }
    .warn { background: #f6c244; color: #212529; } .prim { background: #317cf7; color: #fff; } .dang { background: #cb434a; color: #fff; }

    .debug { height: 74px; flex: none; border-top: 2px solid #ccc; background: #222; display: flex; font-family: "Liberation Sans", Arial, sans-serif; font-size: 26px; color: #f5f5f5; -webkit-text-stroke: .3px currentColor; }
    .blk { display: flex; align-items: center; height: 72px; padding-bottom: 2px; flex: none; }
    .blk svg { margin-right: 18px; }
    .dim { color: #aaa; }
    .ok { width: 86px; background: linear-gradient(#5a7f60, #56855f); padding-left: 19px; font-size: 28px; }
    .route { width: 336px; padding-left: 16px; }
    .route .dim { width: 31px; }
    .time { width: 126px; background: linear-gradient(#9a6b2e, #976a2f); padding-left: 20px; }
    .mem { width: 122px; padding-left: 19px; }
    .log { width: 108px; background: linear-gradient(#9a6b2e, #976a2f); padding-left: 24px; }
    .orm { width: 279px; padding-left: 22px; }
    .user { width: 159px; padding-left: 20px; }
    .twig { width: 145px; padding-left: 20px; }
    .user svg, .twig svg { margin-right: 16px; }
    .db { width: 220px; padding-left: 20px; }
    .sf { margin-left: auto; width: 131px; }
    .sf svg { margin-right: 14px; }
    .x { width: 72px; background: #444; padding-left: 21px; }
    .g { margin-left: 7px; }

    .dock { margin: 22px 0 0 74px; height: 110px; width: 2732px; flex: none; display: flex; padding-left: 4px; background: linear-gradient(90deg, #161c28, #171f30 30%, #171d2a 60%, #17212e); border: 2px solid #363c48; border-bottom: 0; border-radius: 12px 12px 0 0; }
    .slot { width: 91px; height: 110px; margin-top: -2px; flex: none; }
    .gap { height: 110px; margin-top: -2px; display: flex; justify-content: center; padding-top: 14px; flex: none; }
    .gap i { width: 2px; height: 82px; background: #4a515c; }
  `;

  private menubar() {
    const last = MENU.length - 1;
    return html`<div class="menubar">
      <svg class="apple" width="27" height="33" viewBox="0 0 27 33"><path d="M18.500 0 C18.800 3.500 16 7.200 12.800 7 C12.400 3.800 15.500 .4 18.500 0 Z M22.300 17.400 C22.300 14 24.800 12.400 25.500 12 C23.500 9 20.300 8.600 19 8.600 C16.500 8.400 14.500 10 13.300 10 C12 10 10.200 8.600 8 8.700 C3.500 8.800 .6 12.600 .6 18 C.6 25 5 32.600 8.800 32.600 C10.500 32.600 11.500 31.400 13.800 31.400 C16 31.400 17 32.600 18.700 32.600 C21.800 32.600 24.900 28 26.300 23.700 C23.500 22.500 22.300 20 22.300 17.400 Z" fill="#fff"/></svg>
      <div class="app">${fit("Chrome", 109)}</div>
      ${MENU.map(([t, x, w], i) => html`<div style="width:${i < last ? MENU[i + 1][1] - x : 60}px">${fit(t, w)}</div>`)}
      <div class="status">
        <svg width="40" height="44" viewBox="0 0 40 44"><path d="M9 36 C3 36 0 32 0 27 C0 22 3 20 6 19 C5 10 12 9 14 9 H22 C28 9 33 13 33 18 C38 20 40 23 40 27 C40 33 37 36 32 36 Z" fill="#fff"/><path d="M20 16 L27 23 H22.500 V30 H17.500 V23 H13 Z" fill="#191c2a"/></svg>
        <svg style="margin-left:24px" width="36" height="44" viewBox="0 0 36 44"><path d="M7 28 H4 Q1 28 1 25 V12 Q1 9 4 9 H32 Q35 9 35 12 V25 Q35 28 32 28 H29" fill="none" stroke="#fff" stroke-width="2"/><path d="M18 22 L29 36 H7 Z" fill="#fff"/></svg>
        <svg style="margin-left:22px" width="42" height="44" viewBox="0 0 42 44"><g fill="none" stroke="#fff" stroke-width="3"><path d="M1.500 17 Q21 -1 40.500 17"/><path d="M8 22.500 Q21 11 34 22.500"/><path d="M14 28.500 Q21 22.500 28 28.500"/></g><path d="M16.500 32 Q21 29.500 25.500 32 L21 36.500 Z" fill="#fff"/></svg>
        <svg style="margin-left:20px" width="42" height="44" viewBox="0 0 42 44"><path d="M0 18 H7 L16 10 V35 L7 28 H0 Z" fill="#fff"/><g fill="none" stroke="#fff" stroke-width="2.200"><path d="M20.500 17 Q24.500 22.500 20.500 28"/><path d="M27 12.500 Q34 22.500 27 32"/><path d="M33.500 8 Q44 22.500 33.500 37"/></g></svg>
        ${fit("59 %", 57, "pct")}
        <svg style="margin-left:9px" width="47" height="44" viewBox="0 0 47 44"><rect x="1" y="11" width="38" height="22" rx="4" fill="none" stroke="#fff" stroke-width="2"/><rect x="4" y="14" width="18" height="16" fill="#fff"/><path d="M42 17 Q46 18 46 22 Q46 26 42 27 Z" fill="#fff"/></svg>
        ${fit("Dim. 19:47", 140, "clock")}
        <svg style="margin-left:39px" width="30" height="44" viewBox="0 0 30 44"><circle cx="12" cy="20" r="10.200" fill="none" stroke="#fff" stroke-width="2.600"/><path d="M19 27.500 L28 36.500" stroke="#fff" stroke-width="3.200"/></svg>
        <svg style="margin-left:30px" width="38" height="44" viewBox="0 0 38 44"><path d="M0 14 H4 M8 14 H37 M0 22 H4 M8 22 H31 M0 31 H4 M8 31 H37" stroke="#fff" stroke-width="3.600"/></svg>
      </div>
    </div>`;
  }

  private tab(t: Tab) {
    return html`<div class="tab ${t.kind ?? ""}" style=${t.w ? `width:${t.w}px` : nothing}>
      ${ico(t.i)}<span class="label">${t.t}</span>
      ${t.kind === "active" ? html`<svg class="close" width="18" height="18" viewBox="0 0 18 18"><path d="M1.500 1.500 L16.500 16.500 M16.500 1.500 L1.500 16.500" stroke="#fff" stroke-width="2.800"/></svg>` : nothing}
      ${t.kind === "audio" ? html`<svg class="speaker" width="20" height="20" viewBox="0 0 20 20"><path d="M0 6.500 H4 L11 1 V19 L4 13.500 H0 Z" fill="#b5b9bd"/><path d="M14 6 V14 M18 4 V16" stroke="#b5b9bd" stroke-width="2"/></svg>` : nothing}
      ${t.kind === "active" || t.last ? nothing : html`<i class="bar"></i>`}
    </div>`;
  }

  private chrome() {
    return html`
      <div class="strip">
        <div class="lights"><i class="light red"></i><i class="light yellow"></i><i class="light green"></i></div>
        ${TABS.map((t) => this.tab(t))}
        <svg class="plus" width="24" height="24" viewBox="0 0 24 24"><path d="M12 0 V24 M0 12 H24" stroke="#c3c6c9" stroke-width="3.800"/></svg>
      </div>
      <div class="toolbar">
        <div class="nav">
          <svg width="28" height="28" viewBox="0 0 28 28"><path d="M27 14 H3 M14 2 L2.500 14 L14 26" fill="none" stroke="#f1f3f4" stroke-width="3"/></svg>
          <svg width="28" height="28" viewBox="0 0 28 28"><path d="M1 14 H25 M14 2 L25.500 14 L14 26" fill="none" stroke="#86898c" stroke-width="3"/></svg>
          <svg width="30" height="28" viewBox="0 0 30 28"><path d="M23 6.500 A11.500 11.500 0 1 0 25.800 17" fill="none" stroke="#f1f3f4" stroke-width="3"/><path d="M28 1 V12.500 H16.500 Z" fill="#f1f3f4"/></svg>
        </div>
        <div class="pill">
          <svg width="28" height="28" viewBox="0 0 28 28"><circle cx="14" cy="14" r="12.200" fill="none" stroke="#e8eaed" stroke-width="2.600"/><path d="M14 12.500 V21 M14 7.500 V10.500" stroke="#e8eaed" stroke-width="3"/></svg>
          ${fit("127.0.0.1", 107, "host")}${fit(":8000/admin/user/", 234)}
          <svg class="star" width="32" height="32" viewBox="0 0 32 32"><path d="M16 3.500 L19.500 12.400 L29 13 L21.700 19 L24.200 28.500 L16 23.200 L7.800 28.500 L10.300 19 L3 13 L12.500 12.400 Z" fill="none" stroke="#c6c9cb" stroke-width="2.600"/></svg>
        </div>
        <div class="ext">
          <svg width="32" height="32" viewBox="0 0 32 32"><path d="M9.500 0 H22.500 L32 9.500 V22.500 L22.500 32 H9.500 L0 22.500 V9.500 Z" fill="#cf2f24"/><path d="M10.300 15 V9.500 M13.600 16 V6.500 M17 16 V5.500 M20.200 16 V8 M20.500 20 L24 15.500" fill="none" stroke="#fff" stroke-width="2.500" stroke-linecap="round"/><path d="M9 14 H21.500 L23 18 C21.500 25 19.500 27.500 16 27.500 C11.500 27.500 9 25 9 19 Z" fill="#fff"/></svg>
          <svg class="abp" width="32" height="32" viewBox="0 0 32 32"><path d="M9.500 .5 H22.500 L31.500 9.500 V22.500 L22.500 31.500 H9.500 L.5 22.500 V9.500 Z" fill="#bb271c" stroke="#8f8582" stroke-width=".8"/><text x="3" y="21.500" font-family="Inter" font-weight="800" font-size="15" textLength="26.500" lengthAdjust="spacingAndGlyphs" fill="#fff">ABP</text></svg>
          <i class="vr"></i><div class="avatar">Mc</div>
          <svg class="dots" width="8" height="28" viewBox="0 0 8 28"><circle cx="4" cy="4" r="3.100" fill="#f1f3f4"/><circle cx="4" cy="14" r="3.100" fill="#f1f3f4"/><circle cx="4" cy="24" r="3.100" fill="#f1f3f4"/></svg>
        </div>
      </div>
      <div class="marks">${MARKS.map(([t, w, i], n) => html`<div class="mark" style="width:${MARK_X[n + 1] - MARK_X[n]}px">${ico(i)}${fit(t, w)}</div>`)}</div>`;
  }

  private page(): TemplateResult {
    return html`<div class="page">
      <h1>${fit("Gestion utilisateurs", 690)}</h1>
      <div class="row head odd">${fit("Nom", 71)}${fit("Prénom", 116)}${fit("Email", 81)}${fit("Role", 65)}${fit("Annonces", 148)}${fit("Options", 117)}</div>
      ${USERS.map((u, i) => html`<div class="row ${i % 2 ? "odd" : ""}">
        ${u.map(([t, w]) => fit(t, w))}${fit("membre", 116)}
        <div><div class="btn warn">${fit("Voir les annonces", 240)}</div></div>
        <div class="btns"><div class="btn prim">${fit("Modifier", 112)}</div><div class="btn dang">${fit("Supprimer", 144)}</div></div>
      </div>`)}
    </div>`;
  }

  private debug() {
    return html`<div class="debug">
      <div class="blk ok">${fit("200", 47)}</div>
      <div class="blk route">${fit("@", 26, "dim")}${fit("app_admin_user_inde...", 280)}</div>
      <div class="blk time">${fit("1405 ms", 96)}</div>
      <div class="blk mem">${fit("32.5", 50)}${fit("MB", 37, "g dim")}</div>
      <div class="blk log"><svg width="32" height="38" viewBox="0 0 32 38"><path d="M5 0 H22 Q26 0 26 4 V28 Q26 32 22 32 H5 Q1 32 1 28 V4 Q1 0 5 0 Z M10.500 5 V18 H16.500 V5 Z M10.500 22 V27 H16.500 V22 Z" fill="#fff" fill-rule="evenodd"/><path d="M29.800 5 V28 Q29.800 35.500 22 35.500 H5" fill="none" stroke="#fff" stroke-width="2.600"/></svg>${fit("1", 14)}</div>
      <div class="blk orm"><svg width="36" height="38" viewBox="0 0 36 38"><path d="M18 0 L36 11 L18 22 L0 11 Z M0 17 L4 15 L18 24.500 L32 15 L36 17 V19 L18 30 L0 19 Z M0 25 L4 22.500 L18 32 L32 22.500 L36 25 V26.500 L18 37 L0 26.500 Z" fill="#aaa"/></svg>${fit("144", 42)}${fit("in", 19, "g dim")}${fit("47.33", 65, "g")}${fit("ms", 33, "g dim")}</div>
      <div class="blk user"><svg width="32" height="38" viewBox="0 0 32 38"><path d="M16 0 C22 0 26 4.500 26 11 C26 15 24.500 18 22.500 20 C28 22 31.500 28 31.500 37 H.5 C.5 28 4 22 9.500 20 C7.500 18 6 15 6 11 C6 4.500 10 0 16 0 Z" fill="#aaa"/></svg>${fit("anon.", 66)}</div>
      <div class="blk twig"><svg width="32" height="38" viewBox="0 0 32 38"><path d="M4 1 C12 1 18 9 18.500 23 C20 17 25 15 30.500 22 C25 20 24 24 24.500 37.500 H10 C10 29 10 21 .5 18 C8 15 12 18 14 24 C14.500 13 10 4 4 1 Z" fill="#aaa"/></svg>${fit("8", 14)}${fit("ms", 33, "g dim")}</div>
      <div class="blk db"><svg width="34" height="36" viewBox="0 0 34 36">${[0, 12.500, 25].map((y) => svg`<rect x="0" y=${y} width="34" height="10.500" rx="4" fill="#aaa"/><circle cx="27.500" cy=${y + 5.200} r="2.600" fill="#222"/>`)}</svg>${fit("1", 14)}${fit("in", 19, "g dim")}${fit("0.53", 50, "g")}${fit("ms", 33, "g dim")}</div>
      <div class="blk sf"><svg width="37" height="37" viewBox="0 0 32 32">${sfMark("#fff", "#222")}</svg>${fit("4.4.1", 58)}</div>
      <div class="blk x"><svg width="30" height="30" viewBox="0 0 30 30"><path d="M3 3 L27 27 M27 3 L3 27" stroke="#aaa" stroke-width="5.500" stroke-linecap="round"/></svg></div>
    </div>`;
  }

  render() {
    return html`<div class="desktop">
      ${this.menubar()}
      <div class="window">${this.chrome()}${this.page()}${this.debug()}</div>
      <div class="dock">${DOCK.map((d) => typeof d === "number"
        ? html`<div class="gap" style="width:${d}px"><i></i></div>`
        : html`<svg class="slot" viewBox="0 0 91 110">${d[0]}${d[1] ? svg`<circle cx="45.500" cy="102" r="4" fill="#9ba2af"/>` : nothing}</svg>`)}</div>
    </div>`;
  }
}
